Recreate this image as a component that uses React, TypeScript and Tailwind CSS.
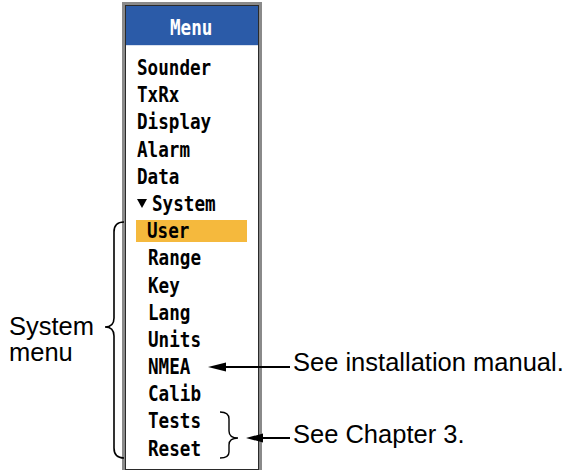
import React from "react";

const topItems = ["Sounder", "TxRx", "Display", "Alarm", "Data"];
const systemItems = ["User", "Range", "Key", "Lang", "Units", "NMEA", "Calib", "Tests", "Reset"];

const mono = { fontFamily: '"DejaVu Sans Mono", "Liberation Mono", monospace' };

const Row = ({ children }: { children: React.ReactNode }) => (
  <div className="h-[27.2px] flex items-center">{children}</div>
);

// narrow, tall menu lettering like the unit's LCD font
const Lcd = ({ children }: { children: React.ReactNode }) => (
  <span className="inline-block origin-left scale-x-[0.8]">{children}</span>
);

export default function App() {
  return (
    <div className="relative w-[570px] h-[471px] bg-white overflow-hidden flex text-black">
      {/* left label */}
      <div className="w-[122px] pt-[313px] pl-[9px] font-['Liberation_Sans',Arial,sans-serif] text-[25.5px] leading-[26px]">
        <div>System</div>
        <div>menu</div>
      </div>

      {/* menu panel */}
      <div className="mt-[2px] w-[140px] h-[468px] border-[3px] border-b-0 border-[#8a8a8a]">
        <div className="h-full border border-[#2a2a2a] flex flex-col">
          <div
            className="h-[39px] bg-[#2b5ba8] flex items-center pl-[44px] pt-[3px] text-white font-bold text-[22px]"
            style={mono}
          >
            <Lcd>Menu</Lcd>
          </div>
          <div className="h-px bg-[#d8e0ee]" />
          <div
            className="pt-[8px] font-bold text-[22px] leading-[27.2px]"
            style={mono}
          >
            {topItems.map((t) => (
              <Row key={t}>
                <span className="pl-[11px]">
                  <Lcd>{t}</Lcd>
                </span>
              </Row>
            ))}
            <Row>
              <span className="pl-[11px] flex items-center gap-[5px]">
                <svg width="10" height="9" viewBox="0 0 10 9">
                  <polygon points="0,0 10,0 5,9" fill="#000" />
                </svg>
                <Lcd>System</Lcd>
              </span>
            </Row>
            {systemItems.map((t) =>
              t === "User" ? (
                <Row key={t}>
                  <div className="ml-[10px] w-[111px] h-[22px] bg-[#f5b93d] flex items-center pl-[11px]">
                    <Lcd>{t}</Lcd>
                  </div>
                </Row>
              ) : (
                <Row key={t}>
                  <span className="pl-[22px]">
                    <Lcd>{t}</Lcd>
                  </span>
                </Row>
              )
            )}
          </div>
        </div>
      </div>

      {/* right notes */}
      <div className="pl-[31px] pt-[349px] font-['Liberation_Sans',Arial,sans-serif] text-[25.5px] leading-[27px] whitespace-nowrap">
        <div>See installation manual.</div>
        <div className="mt-[45px]">See Chapter 3.</div>
      </div>

      {/* braces and arrows drawn over the panel */}
      <svg
        className="absolute inset-0 pointer-events-none"
        width="570"
        height="471"
        viewBox="0 0 570 471"
      >
        <path
          d="M124 222 C117 222 114 225 114 232 L114 318 C114 324 111 327 105 327 C111 327 114 330 114 336 L114 448 C114 455 117 458 124 458"
          fill="none"
          stroke="#000"
          strokeWidth="1.6"
        />
        <path
          d="M220 412 C226 412 229 414 229 419 L229 431 C229 435 232 438 238 438 C232 438 229 441 229 445 L229 452 C229 456 226 458 220 458"
          fill="none"
          stroke="#000"
          strokeWidth="1.4"
        />
        <line x1="218" y1="367" x2="290" y2="367" stroke="#000" strokeWidth="2" />
        <polygon points="208,367 226,362.5 226,371.5" fill="#000" />
        <line x1="256" y1="438" x2="290" y2="438" stroke="#000" strokeWidth="2" />
        <polygon points="246,438 263,433.5 263,442.5" fill="#000" />
      </svg>
    </div>
  );
}
